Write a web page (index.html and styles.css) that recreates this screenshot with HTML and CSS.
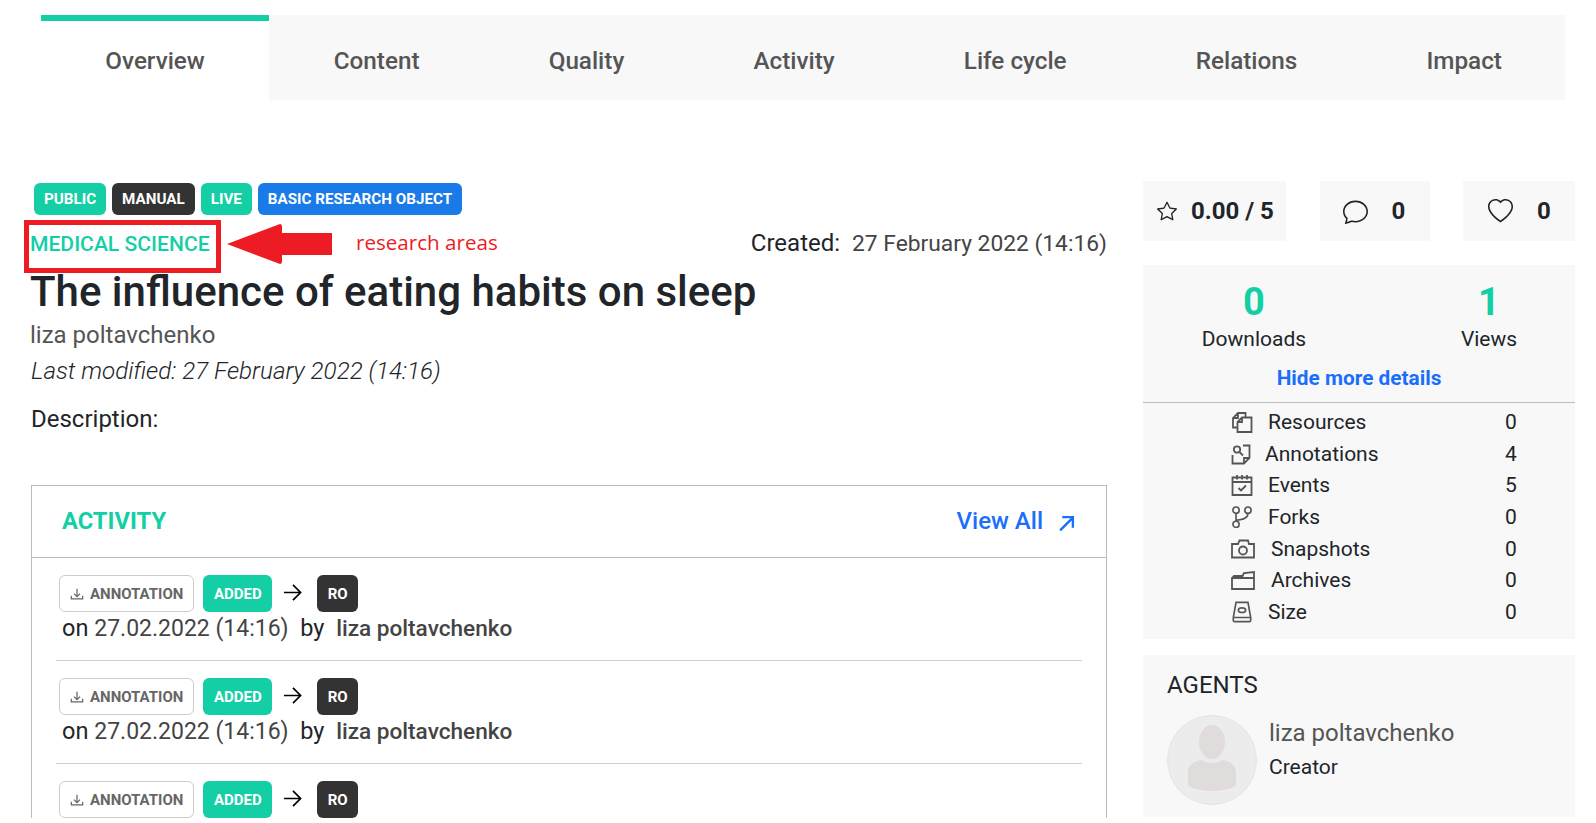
FILE: index.html
```html
<!DOCTYPE html>
<html lang="en">
<head>
    <meta charset="UTF-8">
    <title>The influence of eating habits on sleep</title>
    <link rel="stylesheet" href="styles.css">
</head>
<body>
<nav class="tabs">
    <a class="tab active">Overview</a>
    <a class="tab">Content</a>
    <a class="tab">Quality</a>
    <a class="tab">Activity</a>
    <a class="tab">Life cycle</a>
    <a class="tab">Relations</a>
    <a class="tab">Impact</a>
</nav>

<section class="page">
    <section class="main">
        <div class="badges">
            <span class="badge green">PUBLIC</span>
            <span class="badge dark">MANUAL</span>
            <span class="badge green">LIVE</span>
            <span class="badge blue">BASIC RESEARCH OBJECT</span>
        </div>
        <div class="areaRow">
            <span class="area">MEDICAL SCIENCE</span>
            <span class="created">Created:&nbsp; <span class="date">27 February 2022 (14:16)</span></span>
            <!-- red markup drawn over the screenshot -->
            <span class="markBox"></span>
            <svg class="markArrow" viewBox="0 0 105 40"><path d="M0 20 L53 0 Q55 0 55 3 V9 H105 V31 H55 V37 Q55 40 53 40 Z"/></svg>
            <span class="markText">research areas</span>
        </div>
        <h1>The influence of eating habits on sleep</h1>
        <div class="author">liza poltavchenko</div>
        <div class="modified">Last modified: 27 February 2022 (14:16)</div>
        <div class="description">Description:</div>

        <section class="activity">
            <header class="activityHead">
                <h2>ACTIVITY</h2>
                <a class="viewAll">View All
                    <svg viewBox="0 0 16 16"><path d="M2 14.5 L14 2.5 M4 2 H14 V12"/></svg>
                </a>
            </header>
            <div class="rows">
                <div class="row">
                    <div class="chips">
                        <span class="chip outline">
                            <svg viewBox="0 0 16 16"><path d="M1.5 10 V13.5 H14.5 V10 M8 2 V10.5 M4.5 7.5 L8 11 L11.5 7.5"/></svg>
                            ANNOTATION
                        </span>
                        <span class="chip green">ADDED</span>
                        <svg class="to" viewBox="0 0 20 20"><path d="M1 10 H18 M10.5 2 L18.5 10 L10.5 18"/></svg>
                        <span class="chip dark">RO</span>
                    </div>
                    <div class="when">on <span class="grey">27.02.2022 (14:16)</span>&nbsp; by&nbsp; <span class="who">liza poltavchenko</span></div>
                </div>
                <div class="row">
                    <div class="chips">
                        <span class="chip outline">
                            <svg viewBox="0 0 16 16"><path d="M1.5 10 V13.5 H14.5 V10 M8 2 V10.5 M4.5 7.5 L8 11 L11.5 7.5"/></svg>
                            ANNOTATION
                        </span>
                        <span class="chip green">ADDED</span>
                        <svg class="to" viewBox="0 0 20 20"><path d="M1 10 H18 M10.5 2 L18.5 10 L10.5 18"/></svg>
                        <span class="chip dark">RO</span>
                    </div>
                    <div class="when">on <span class="grey">27.02.2022 (14:16)</span>&nbsp; by&nbsp; <span class="who">liza poltavchenko</span></div>
                </div>
                <div class="chips">
                    <span class="chip outline">
                        <svg viewBox="0 0 16 16"><path d="M1.5 10 V13.5 H14.5 V10 M8 2 V10.5 M4.5 7.5 L8 11 L11.5 7.5"/></svg>
                        ANNOTATION
                    </span>
                    <span class="chip green">ADDED</span>
                    <svg class="to" viewBox="0 0 20 20"><path d="M1 10 H18 M10.5 2 L18.5 10 L10.5 18"/></svg>
                    <span class="chip dark">RO</span>
                </div>
            </div>
        </section>
    </section>

    <aside class="side">
        <div class="scores">
            <div class="score rate">
                <svg viewBox="0 0 16 16"><path d="M2.866 14.85c-.078.444.36.791.746.593l4.39-2.256 4.389 2.256c.386.198.824-.149.746-.592l-.83-4.73 3.522-3.356c.33-.314.16-.888-.282-.95l-4.898-.696L8.465.792a.513.513 0 0 0-.927 0L5.354 5.12l-4.898.696c-.441.062-.612.636-.283.95l3.523 3.356-.83 4.73zm4.905-2.767-3.686 1.894.694-3.957a.565.565 0 0 0-.163-.505L1.71 6.745l4.052-.576a.525.525 0 0 0 .393-.288L8 2.223l1.847 3.658a.525.525 0 0 0 .393.288l4.052.575-2.906 2.77a.565.565 0 0 0-.163.506l.694 3.957-3.686-1.894a.503.503 0 0 0-.461 0z"/></svg>
                <span>0.00 / 5</span>
            </div>
            <div class="score comments">
                <svg viewBox="0 0 16 16"><path d="M2.678 11.894a1 1 0 0 1 .287.801 10.97 10.97 0 0 1-.398 2c1.395-.323 2.247-.697 2.634-.893a1 1 0 0 1 .71-.074A8.06 8.06 0 0 0 8 14c3.996 0 7-2.807 7-6 0-3.192-3.004-6-7-6S1 4.808 1 8c0 1.468.617 2.83 1.678 3.894zm-.493 3.905a21.682 21.682 0 0 1-.713.129c-.2.032-.352-.176-.273-.362a9.68 9.68 0 0 0 .244-.637l.003-.01c.248-.72.45-1.548.524-2.319C.743 11.37 0 9.76 0 8c0-3.866 3.582-7 8-7s8 3.134 8 7-3.582 7-8 7a9.06 9.06 0 0 1-2.347-.306c-.52.263-1.639.742-3.468 1.105z"/></svg>
                <span>0</span>
            </div>
            <div class="score likes">
                <svg viewBox="0 0 16 16"><path d="m8 2.748-.717-.737C5.6.281 2.514.878 1.4 3.053c-.523 1.023-.641 2.5.314 4.385.92 1.815 2.834 3.989 6.286 6.357 3.452-2.368 5.365-4.542 6.286-6.357.955-1.886.838-3.362.314-4.385C13.486.878 10.4.28 8.717 2.01L8 2.748zM8 15C-7.333 4.868 3.279-3.04 7.824 1.143c.06.055.119.112.176.171a3.12 3.12 0 0 1 .176-.17C12.72-3.042 23.333 4.867 8 15z"/></svg>
                <span>0</span>
            </div>
        </div>

        <section class="stats">
            <div class="counts">
                <div class="count downloads"><b>0</b><span>Downloads</span></div>
                <div class="count views"><b>1</b><span>Views</span></div>
            </div>
            <a class="more">Hide more details</a>
            <div class="details">
                <div class="detail">
                    <svg viewBox="0 0 22 22"><path d="M11 6.5 H20.5 V21 H6.5 V11 Z M11 6.5 V11 H6.5 M14.5 6.5 V2 H7 L2 7 V16.5 H6.5 M7 2 V7 H2"/></svg>
                    <span class="name">Resources</span><span class="num">0</span>
                </div>
                <div class="detail shiftA">
                    <svg viewBox="0 0 22 22"><circle cx="6" cy="6.5" r="3.2"/><path d="M8.3 8.8 L12 12.5 M12 2.5 H18.5 V15 L13 20.5 H1.5 V12 M18.5 15 H13 V20.5"/></svg>
                    <span class="name">Annotations</span><span class="num">4</span>
                </div>
                <div class="detail">
                    <svg viewBox="0 0 22 22"><path d="M1.5 3.5 H20.5 V21 H1.5 Z M1.5 8 H20.5 M6 1 V5.5 M11 1 V5.5 M16 1 V5.5 M7.5 14 L10 16.5 L15 11.5"/></svg>
                    <span class="name">Events</span><span class="num">5</span>
                </div>
                <div class="detail">
                    <svg viewBox="0 0 22 24"><circle cx="4.5" cy="4.5" r="3.4"/><circle cx="17.5" cy="4.5" r="3.4"/><circle cx="4.5" cy="20" r="3.4"/><path d="M4.5 8 V16.5 M4.5 15.5 Q17.5 15 17.5 8"/></svg>
                    <span class="name">Forks</span><span class="num">0</span>
                </div>
                <div class="detail shiftB">
                    <svg viewBox="0 0 24 20"><path d="M1 5 H7 L8.5 1.5 H17 L18 5 H23 V18.5 H1 Z"/><circle cx="12" cy="11.5" r="4"/></svg>
                    <span class="name">Snapshots</span><span class="num">0</span>
                </div>
                <div class="detail shiftB">
                    <svg viewBox="0 0 24 20"><path d="M1 8 V19 H23 V2 L13 3 L11.5 6 H3 L1 8 H23"/></svg>
                    <span class="name">Archives</span><span class="num">0</span>
                </div>
                <div class="detail">
                    <svg viewBox="0 0 22 24"><path d="M4.5 1.5 H17.5 L20.5 18 V21 Q20.5 22.5 19 22.5 H3 Q1.5 22.5 1.5 21 V18 Z M1.5 18 H20.5"/><ellipse cx="11" cy="10" rx="4" ry="2.5"/></svg>
                    <span class="name">Size</span><span class="num">0</span>
                </div>
            </div>
        </section>

        <section class="agents">
            <h3>AGENTS</h3>
            <div class="agent">
                <svg class="avatar" viewBox="0 0 90 90">
                    <circle cx="45" cy="45" r="44.5"/>
                    <ellipse class="body" cx="45" cy="27" rx="13" ry="17"/>
                    <path class="body" d="M21 70 V58 C21 49 28 46 34 45 C40 49 50 49 56 45 C62 46 69 49 69 58 V70 C60 78 30 78 21 70 Z"/>
                </svg>
                <div class="agentText">
                    <div class="agentName">liza poltavchenko</div>
                    <div class="agentRole">Creator</div>
                </div>
            </div>
        </section>
    </aside>
</section>
</body>
</html>
```

FILE: styles.css
```css
html, body {
    height: 100%;
    overflow: hidden;
}

body {
    margin: 0;
    background: #fff;
    color: #212529;
    font-family: Roboto, "Liberation Sans", sans-serif;
}

svg {
    flex: none;
}

.tabs {
    display: flex;
    height: 85px;
    margin: 15px 31px 0 41px;
    background: #f8f8f8;
}

.tab {
    display: flex;
    flex: none;
    align-items: center;
    padding: 6px 64.6px 0;
    color: #555;
    font-size: 24.25px;
    font-weight: 500;
    white-space: nowrap;
}

.tab.active {
    border-top: 6px solid #14cfa5;
    padding: 0 64.3px;
    background: #fff;
}

.page {
    display: grid;
    grid-template-columns: 1076px 432px;
    gap: 36px;
    padding: 81px 0 0 31px;
}

.main {
    padding-top: 2px;
}

.badges {
    display: flex;
    gap: 6px;
    padding-left: 3px;
}

.badge {
    padding: 0 10px;
    border-radius: 6px;
    color: #fff;
    font-size: 15.2px;
    font-weight: 700;
    line-height: 32px;
}

.green {
    background: #14cfa5;
}

.dark {
    background: #333;
}

.blue {
    background: #1a7ae8;
}

.areaRow {
    position: relative;
    display: flex;
    justify-content: space-between;
    align-items: center;
    height: 46px;
    margin-top: 5px;
}

.area {
    margin-left: -1px;
    color: #14cfa5;
    font-size: 21.1px;
    font-weight: 500;
}

.created {
    font-size: 24px;
}

.date {
    color: #444;
    font-size: 22.8px;
}

.grey {
    color: #444;
    font-size: 23px;
}

.markBox {
    position: absolute;
    left: -7px;
    top: 0;
    width: 187px;
    height: 43px;
    border: 5px solid #ed1c24;
}

.markArrow {
    position: absolute;
    left: 196px;
    top: 4px;
    width: 105px;
    height: 40px;
    fill: #ed1c24;
}

.markText {
    position: absolute;
    left: 325px;
    top: 8px;
    color: #ed1c24;
    font-family: "Open Sans", sans-serif;
    font-size: 20.6px;
}

h1 {
    margin: -1px 0 0 -1px;
    color: #212529;
    font-size: 42px;
    font-weight: 500;
    line-height: 54px;
}

.author {
    margin: 1px 0 0 -1px;
    color: #555;
    font-size: 24px;
    line-height: 30px;
}

.modified {
    margin-top: 6px;
    font-size: 24.2px;
    font-style: italic;
    font-weight: 300;
    line-height: 30px;
}

.description {
    margin-top: 18px;
    font-size: 24px;
    line-height: 30px;
}

.activity {
    margin-top: 51px;
    border: 1px solid #bbb;
    border-bottom: 0;
}

.activityHead {
    display: flex;
    justify-content: space-between;
    align-items: center;
    height: 70px;
    padding: 0 31px 1px 30px;
    border-bottom: 1px solid #bbb;
}

h2 {
    margin: 0;
    color: #14cfa5;
    font-size: 23.7px;
    font-weight: 700;
}

.viewAll {
    display: flex;
    align-items: center;
    gap: 15px;
    color: #1a6ffa;
    font-size: 24px;
    font-weight: 500;
}

.viewAll svg {
    width: 17px;
    height: 17px;
    margin-top: 4px;
    fill: none;
    stroke: #1a6ffa;
    stroke-width: 2.2;
}

.rows {
    padding: 17px 24px 0;
}

.row {
    height: 85px;
    margin-bottom: 17px;
    border-bottom: 1px solid #ccc;
}

.chips {
    display: flex;
    align-items: center;
    height: 37px;
    padding-left: 3px;
}

.chip {
    display: flex;
    align-items: center;
    height: 37px;
    box-sizing: border-box;
    padding: 0 10.5px;
    border-radius: 6px;
    color: #fff;
    font-size: 15px;
    font-weight: 700;
}

.chip.outline {
    gap: 6px;
    margin-right: 9px;
    padding: 0 10px;
    border: 1px solid #ccc;
    color: #666;
}

.chip.outline svg {
    width: 14px;
    height: 14px;
    fill: none;
    stroke: #666;
    stroke-width: 1.4;
}

.to {
    width: 19px;
    height: 19px;
    margin: 0 15px 2px 11px;
    fill: none;
    stroke: #000;
    stroke-width: 1.8;
}

.when {
    padding-left: 6px;
    font-size: 23.5px;
    line-height: 33px;
}

.who {
    color: #444;
    font-weight: 500;
    font-size: 22.6px;
}

.scores {
    display: flex;
    justify-content: space-between;
}

.score {
    display: flex;
    align-items: center;
    height: 60px;
    box-sizing: border-box;
    background: #f8f8f8;
    font-size: 24px;
    font-weight: 700;
}

.score svg {
    width: 20px;
    height: 20px;
    fill: #222;
}

.rate {
    width: 143px;
    gap: 14px;
    padding-left: 14px;
}

.comments {
    width: 110px;
    gap: 24px;
    padding-left: 23px;
}

.comments svg,
.likes svg {
    width: 25px;
    height: 25px;
}

.likes {
    width: 112px;
    gap: 24px;
    padding-left: 25px;
}

.stats {
    margin-top: 24px;
    padding-top: 12px;
    background: #f8f8f8;
}

.counts {
    display: flex;
    height: 81px;
}

.count {
    display: flex;
    flex: none;
    flex-direction: column;
    align-items: center;
    font-size: 21px;
}

.count b {
    color: #14cfa5;
    font-size: 38px;
    line-height: 50px;
}

.downloads {
    width: 222px;
}

.views {
    width: 100px;
    margin-left: 74px;
}

.more {
    display: block;
    margin-top: 5px;
    color: #1a6ffa;
    font-size: 20.8px;
    font-weight: 700;
    line-height: 30px;
    text-align: center;
}

.details {
    margin-top: 9px;
    padding: 3px 0 11px 88px;
    border-top: 1px solid #bbb;
}

.detail {
    display: flex;
    align-items: center;
    height: 31.7px;
    font-size: 21px;
}

.detail svg {
    width: 22px;
    height: 22px;
    fill: none;
    stroke: #555;
    stroke-width: 1.8;
}

.name {
    width: 237px;
    margin-left: 15px;
}

.shiftA .name {
    width: 240px;
    margin-left: 12px;
}

.shiftB svg {
    width: 24px;
    height: 20px;
}

.shiftB .name {
    width: 234px;
    margin-left: 16px;
}

.agents {
    margin-top: 16px;
    height: 162px;
    padding: 15px 24px 0;
    box-sizing: border-box;
    background: #f8f8f8;
}

h3 {
    margin: 0;
    font-size: 24px;
    font-weight: 400;
    line-height: 30px;
}

.agent {
    display: flex;
    gap: 12px;
    margin-top: 15px;
}

.avatar {
    width: 90px;
    height: 90px;
    fill: #ececec;
    stroke: #e4e4e4;
}

.avatar .body {
    fill: #e0dcdc;
    stroke: none;
}

.agentName {
    margin-top: 2px;
    color: #555;
    font-size: 24px;
    line-height: 32px;
}

.agentRole {
    margin-top: 3px;
    font-size: 21px;
    line-height: 30px;
}
```
